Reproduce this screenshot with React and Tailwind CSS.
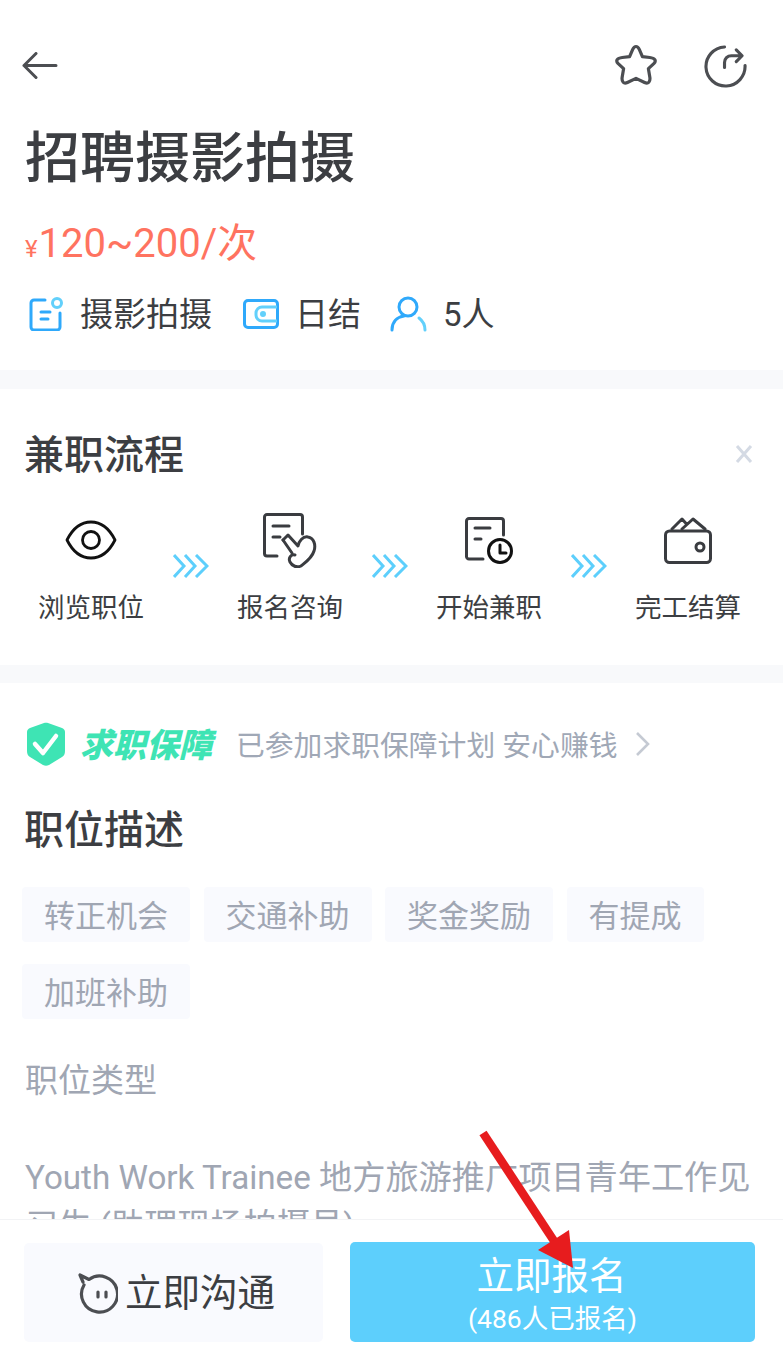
const FONT = "font-['Roboto','Noto_Sans_CJK_SC',sans-serif]";

const STEPS = [
  { label: "浏览职位", icon: <EyeIcon /> },
  { label: "报名咨询", icon: <SignIcon /> },
  { label: "开始兼职", icon: <ClockDocIcon /> },
  { label: "完工结算", icon: <WalletIcon /> },
];

const CHIPS = ["转正机会", "交通补助", "奖金奖励", "有提成", "加班补助"];

function EyeIcon() {
  return (
    <svg width="52" height="40" viewBox="0 0 52 40" fill="none" stroke="#111" strokeWidth="2.8">
      <path d="M2 20C8 8 16 2 26 2s18 6 24 18c-6 12-14 18-24 18S8 32 2 20z" strokeLinejoin="round" />
      <circle cx="26" cy="20" r="8.500" />
    </svg>
  );
}

function SignIcon() {
  return (
    <svg width="54" height="55" viewBox="0 0 54 55" fill="none" stroke="#3a3c40" strokeWidth="3" strokeLinecap="round" strokeLinejoin="round">
      <path d="M14 43H4a2.500 2.500 0 0 1-2.500-2.500V4A2.500 2.500 0 0 1 4 1.500h33A2.500 2.500 0 0 1 39.500 4v17" />
      <path d="M10 13h16M10 24h7" />
      <path d="M20 27l5-5 10 11c1-5 5-10 10-9 6 1 8 8 6 14-2 7-8 11-13 15-4 2-9 0-11-4-2-4 1-8 5-7" />
      <path d="M20 27l9 13" />
    </svg>
  );
}

function ClockDocIcon() {
  return (
    <svg width="48" height="47" viewBox="0 0 48 47" fill="none" stroke="#3a3c40" strokeWidth="3" strokeLinecap="round" strokeLinejoin="round">
      <path d="M18 42H4a2.500 2.500 0 0 1-2.500-2.500V4A2.500 2.500 0 0 1 4 1.500h32A2.500 2.500 0 0 1 38.500 4v14" />
      <path d="M10 11h15M10 22h6" />
      <circle cx="35" cy="34" r="11.500" stroke="#111" />
      <path d="M35 28v8h6" stroke="#111" />
    </svg>
  );
}

function WalletIcon() {
  return (
    <svg width="48" height="47" viewBox="0 0 48 47" fill="none" stroke="#3a3c40" strokeWidth="3" strokeLinecap="round" strokeLinejoin="round">
      <rect x="1.500" y="14" width="45" height="31.500" rx="4" />
      <path d="M8 12L18 2l5 5.500M18 12L29 2l12 10" />
      <circle cx="36" cy="30" r="4" />
    </svg>
  );
}

function Chevrons() {
  return (
    <svg width="36" height="24" viewBox="0 0 36 24" fill="none" stroke="#5dcffc" strokeWidth="3" className="mt-[44px] shrink-0">
      <path d="M1 1l10 11L1 23M12 1l10 11-10 11M23 1l11 11-11 11" />
    </svg>
  );
}

export default function App() {
  return (
    <div className={`relative h-[1348px] w-[783px] overflow-hidden bg-white ${FONT} text-[#3c3e42]`}>
      {/* Header */}
      <section className="h-[370px] px-[25px]">
        <div className="flex h-[126px] items-start justify-between pt-[44px] pr-[11px]">
          <svg width="36" height="28" viewBox="0 0 36 28" fill="none" stroke="#4c4e52" strokeWidth="3" strokeLinecap="round" strokeLinejoin="round" className="-ml-[3px] mt-[8px]">
            <path d="M34 13.500H2M14 1.500L2 13.500l12 12" />
          </svg>
          <div className="flex items-center gap-[46px]">
            <svg width="44" height="44" viewBox="0 0 44 44" fill="none" stroke="#4c4e52" strokeWidth="3.200" strokeLinejoin="round">
              <path d="M22 2.500c1.600 0 2.600 1.400 3.400 3.200l3 7 7.400.8c5 .6 7 3 4 6.200l-5.400 5 1.400 8.200c.8 5-1.600 7.400-5.200 5.600L22 34.400l-8.600 4.100c-3.600 1.800-6-.6-5.200-5.600l1.400-8.200-5.400-5c-3-3.200-1-5.600 4-6.200l7.400-.8 3-7c.8-1.800 1.800-3.200 3.400-3.200z" />
            </svg>
            <svg width="43" height="43" viewBox="0 0 44 44" fill="none" stroke="#4c4e52" strokeWidth="3.200" strokeLinecap="round" strokeLinejoin="round">
              <path d="M21 2A20 20 0 1 0 42 21" />
              <path d="M21 23v-5c0-4 3-7 7-7h9M33 5l6 6-6 6" />
            </svg>
          </div>
        </div>
        <h1 className="h-[64px] text-[55px] leading-[64px] font-medium">招聘摄影拍摄</h1>
        <div className="mt-[29px] flex h-[50px] items-baseline text-[#ff7360]">
          <span className="text-[24px]">¥</span>
          <span className="ml-[1px] text-[40px] leading-[50px]">120~200/次</span>
        </div>
        <div className="mt-[20px] flex h-[50px] items-center text-[33px]">
          <svg width="34" height="34" viewBox="0 0 34 34" fill="none" strokeWidth="3" strokeLinecap="round" className="ml-[4px]">
            <path d="M16 3H5a3 3 0 0 0-3 3v24a3 3 0 0 0 3 3h23a3 3 0 0 0 3-3V16" stroke="#2fa9fb" />
            <path d="M12 15h9M12 22h7" stroke="#2fa9fb" />
            <circle cx="28" cy="6" r="4.500" stroke="#62d0fb" />
          </svg>
          <span className="ml-[17px] w-[132px] pt-[2px]">摄影拍摄</span>
          <svg width="36" height="30" viewBox="0 0 36 30" fill="none" strokeWidth="3" className="ml-[31px]">
            <rect x="1.500" y="1.500" width="33" height="27" rx="3.500" stroke="#2fa9fb" />
            <path d="M34 8H19a6 6 0 0 0-6 6v2a6 6 0 0 0 6 6h15" stroke="#62d0fb" />
            <circle cx="20" cy="15" r="1.500" fill="#62d0fb" stroke="#62d0fb" />
          </svg>
          <span className="ml-[16px] pt-[2px]">日结</span>
          <svg width="37" height="36" viewBox="0 0 37 36" fill="none" strokeWidth="3" strokeLinecap="round" className="ml-[29px]">
            <circle cx="18" cy="11" r="9" stroke="#2fa9fb" />
            <path d="M2 34c0-8 5-13 12-14" stroke="#2fa9fb" />
            <path d="M35 34c0-5-2-9-6-12" stroke="#62d0fb" />
          </svg>
          <span className="ml-[16px] pt-[2px]">5人</span>
        </div>
      </section>

      <div className="h-[19px] bg-[#f8f9fb]" />

      {/* Flow */}
      <section className="h-[276px] px-[25px] pt-[42px]">
        <div className="flex h-[50px] items-center justify-between">
          <h2 className="-ml-[1px] text-[40px] leading-[50px] font-medium">兼职流程</h2>
          <svg width="18" height="18" viewBox="0 0 18 18" stroke="#d4dae4" strokeWidth="3" className="mr-[5px] -mt-[4px]">
            <path d="M2 1l14 16M16 1L2 17" />
          </svg>
        </div>
        <div className="mt-[29px] flex justify-between pl-[13px] pr-[17px]">
          {STEPS.map((step, i) => (
            <div key={step.label} className="contents">
              {i > 0 && <Chevrons />}
              <div className="flex w-[106px] flex-col items-center">
                <div className="flex h-[60px] items-center justify-center">{step.icon}</div>
                <span className="mt-[20px] whitespace-nowrap text-[26.500px] leading-[36px]">{step.label}</span>
              </div>
            </div>
          ))}
        </div>
      </section>

      <div className="h-[18px] bg-[#f8f9fb]" />

      {/* Guarantee and description */}
      <section className="px-[25px] pt-[38px]">
        <div className="flex h-[46px] items-center">
          <svg width="40" height="44" viewBox="0 0 40 44" className="ml-[1px] shrink-0">
            <path d="M18 1L4 6C2 7 1 8 1 10v19c0 3 1 5 3 6l13 8c2 1 4 1 6 0l13-8c2-1 3-3 3-6V10c0-2-1-3-3-4L22 1c-1-.5-3-.5-4 0z" fill="#3ee4b4" />
            <path d="M9 22l8 9 13-17" fill="none" stroke="#fff" strokeWidth="4.500" strokeLinecap="round" strokeLinejoin="round" />
          </svg>
          <span className="ml-[14px] pt-[4px] text-[33px] font-black italic text-[#3ee4b4]">求职保障</span>
          <span className="ml-[24px] pt-[6px] text-[28.800px] text-[#a0a8b6]">已参加求职保障计划 安心赚钱</span>
          <svg width="14" height="24" viewBox="0 0 14 24" fill="none" stroke="#c5cad3" strokeWidth="2.600" className="ml-[18px]">
            <path d="M1 1l11 11L1 23" />
          </svg>
        </div>
        <h2 className="-ml-[1px] mt-[39px] h-[50px] text-[40px] leading-[50px] font-medium">职位描述</h2>
        <div className="-ml-[3px] mt-[31px] flex flex-wrap gap-x-[13.500px] gap-y-[22px]">
          {CHIPS.map((chip) => (
            <span key={chip} className="flex h-[55px] items-center rounded-[4px] bg-[#f9fafe] px-[22px] pt-[5px] text-[31px] text-[#a0a6b3]">
              {chip}
            </span>
          ))}
        </div>
        <p className="mt-[38px] text-[33px] leading-[48px] text-[#a0a6b3]">职位类型</p>
        <p className="mt-[49px] text-[33.200px] leading-[48px] text-[#a0a6b3]">
          Youth Work Trainee 地方旅游推广项目青年工作见习生 (助理现场拍摄员)
        </p>
      </section>

      {/* Bottom bar */}
      <div className="absolute inset-x-0 bottom-0 flex h-[129px] gap-[27px] border-t border-[#f2f3f5] bg-white pl-[24px] pr-[28px] pt-[23px]">
        <button className="flex h-[99px] w-[299px] items-center gap-[7px] rounded-[5px] bg-[#f9fafe] pl-[54px] text-[37.500px]">
          <svg width="40" height="41" viewBox="0 0 40 41" fill="none" stroke="#4c4e52" strokeWidth="3.200" strokeLinecap="round" strokeLinejoin="round" className="mt-[2px]">
            <path d="M6 12A18 18 0 1 0 11 6.500L2 2l3 7" />
            <path d="M20 19v5M28 19v5" />
          </svg>
          <span className="pt-[2px]">立即沟通</span>
        </button>
        <button className="-mt-px flex h-[100px] w-[405px] flex-col items-center justify-center rounded-[5px] bg-[#5dcffc] pt-[2px] text-white">
          <span className="-ml-[2px] text-[37.500px] leading-[50px]">立即报名</span>
          <span className="mt-[1px] text-[26.500px] leading-[34px]">(486人已报名)</span>
        </button>
      </div>

      {/* Red annotation arrow */}
      <svg width="120" height="150" viewBox="0 0 120 150" className="absolute left-[470px] top-[1125px]">
        <path d="M13 8l73 111" stroke="#e71c1e" strokeWidth="8.500" />
        <path d="M99 105L68 125l35 18z" fill="#e71c1e" />
      </svg>
    </div>
  );
}
